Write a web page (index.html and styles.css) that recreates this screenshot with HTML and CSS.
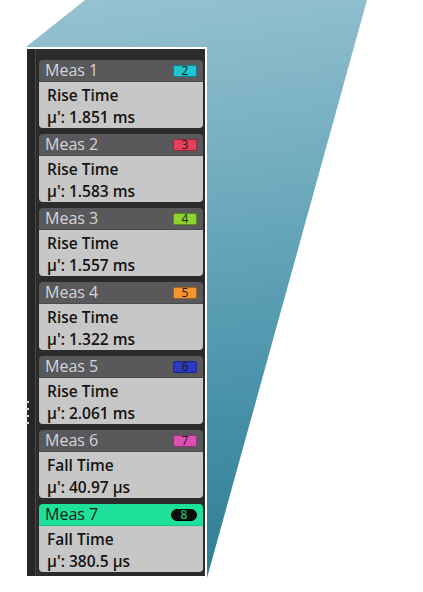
FILE: index.html
```html
<!DOCTYPE html>
<html>
<head>
<meta charset="utf-8">
<link rel="stylesheet" href="styles.css">
</head>
<body>
<div class="stage">
  <div class="panel">
    <div class="strip">
      <div class="grip"><i></i><i></i><i></i><i></i></div>
    </div>
    <div class="list">
      <div class="card">
        <div class="head"><span class="name">Meas 1</span><span class="badge b2">2</span></div>
        <div class="body"><div>Rise Time</div><div>µ': 1.851 ms</div></div>
      </div>
      <div class="card">
        <div class="head"><span class="name">Meas 2</span><span class="badge b3">3</span></div>
        <div class="body"><div>Rise Time</div><div>µ': 1.583 ms</div></div>
      </div>
      <div class="card">
        <div class="head"><span class="name">Meas 3</span><span class="badge b4">4</span></div>
        <div class="body"><div>Rise Time</div><div>µ': 1.557 ms</div></div>
      </div>
      <div class="card">
        <div class="head"><span class="name">Meas 4</span><span class="badge b5">5</span></div>
        <div class="body"><div>Rise Time</div><div>µ': 1.322 ms</div></div>
      </div>
      <div class="card">
        <div class="head"><span class="name">Meas 5</span><span class="badge b6">6</span></div>
        <div class="body"><div>Rise Time</div><div>µ': 2.061 ms</div></div>
      </div>
      <div class="card">
        <div class="head"><span class="name">Meas 6</span><span class="badge b7">7</span></div>
        <div class="body"><div>Fall Time</div><div>µ': 40.97 µs</div></div>
      </div>
      <div class="card active">
        <div class="head"><span class="name">Meas 7</span><span class="badge b8">8</span></div>
        <div class="body"><div>Fall Time</div><div>µ': 380.5 µs</div></div>
      </div>
    </div>
  </div>
</div>
</body>
</html>
```
FILE: styles.css
```css
html, body {
  margin: 0;
  padding: 0;
  background: #ffffff;
}
.stage {
  position: relative;
  width: 423px;
  height: 592px;
  overflow: hidden;
  padding-top: 47px;
  padding-left: 25px;
  box-sizing: border-box;
  font-family: "Open Sans", "Noto Sans", sans-serif;
}
.stage::before {
  content: "";
  position: absolute;
  left: 0;
  top: 0;
  width: 423px;
  height: 592px;
  background: linear-gradient(172deg, #98c3d2 0%, #6eaabd 35%, #4a93aa 65%, #28798f 100%);
  clip-path: polygon(85px 0, 367px 0, 207px 578px, 25px 578px, 25px 48px, 26px 47px);
}
.panel {
  position: relative;
  display: flex;
  width: 182px;
  height: 531px;
  box-sizing: border-box;
  border: 2px solid #ffffff;
  background: #2b2b2b;
}
.strip {
  width: 8px;
  border-right: 1px solid #474747;
  background: #262626;
  padding-top: 352px;
  box-sizing: content-box;
}
.grip {
  display: flex;
  flex-direction: column;
  gap: 5px;
  margin-left: -1px;
}
.grip i {
  display: block;
  width: 3px;
  height: 2px;
  background: #d8d8d8;
}
.list {
  display: flex;
  flex-direction: column;
  gap: 6px;
  padding: 11px 2px 4px 3px;
  width: 164px;
}
.card {
  display: flex;
  flex-direction: column;
  height: 68px;
  border-radius: 4px;
  overflow: hidden;
}
.head {
  display: flex;
  align-items: center;
  justify-content: space-between;
  height: 22px;
  padding: 0 6px 0 6px;
  background: #59595b;
  border-bottom: 1px solid #4a4a4a;
  box-sizing: border-box;
}
.name {
  color: #d6d6d6;
  font-size: 16px;
  line-height: 21px;
}
.badge {
  width: 24px;
  height: 12px;
  box-sizing: border-box;
  border: 1px solid rgba(0,0,0,0.35);
  border-radius: 2px;
  font-size: 12px;
  line-height: 10px;
  text-align: center;
  color: #1a1a1a;
}
.b2 { background: #1ec6cf; }
.b3 { background: #e6405d; }
.b4 { background: #8cd42e; }
.b5 { background: #f4952f; }
.b6 { background: #2c39c4; }
.b7 { background: #dc4fb3; }
.b8 {
  background: #0c0c0c;
  color: #1de19b;
  border-radius: 6px;
  width: 26px;
  border-color: #000;
}
.body {
  flex: 1;
  background: #c7c7c7;
  padding: 2px 0 0 8px;
  color: #141414;
  font-size: 15.5px;
  font-weight: 600;
  line-height: 22px;
}
.active .head {
  background: #1de19b;
  border-bottom-color: #18c488;
}
.active .name {
  color: #1a1a1a;
}
```
